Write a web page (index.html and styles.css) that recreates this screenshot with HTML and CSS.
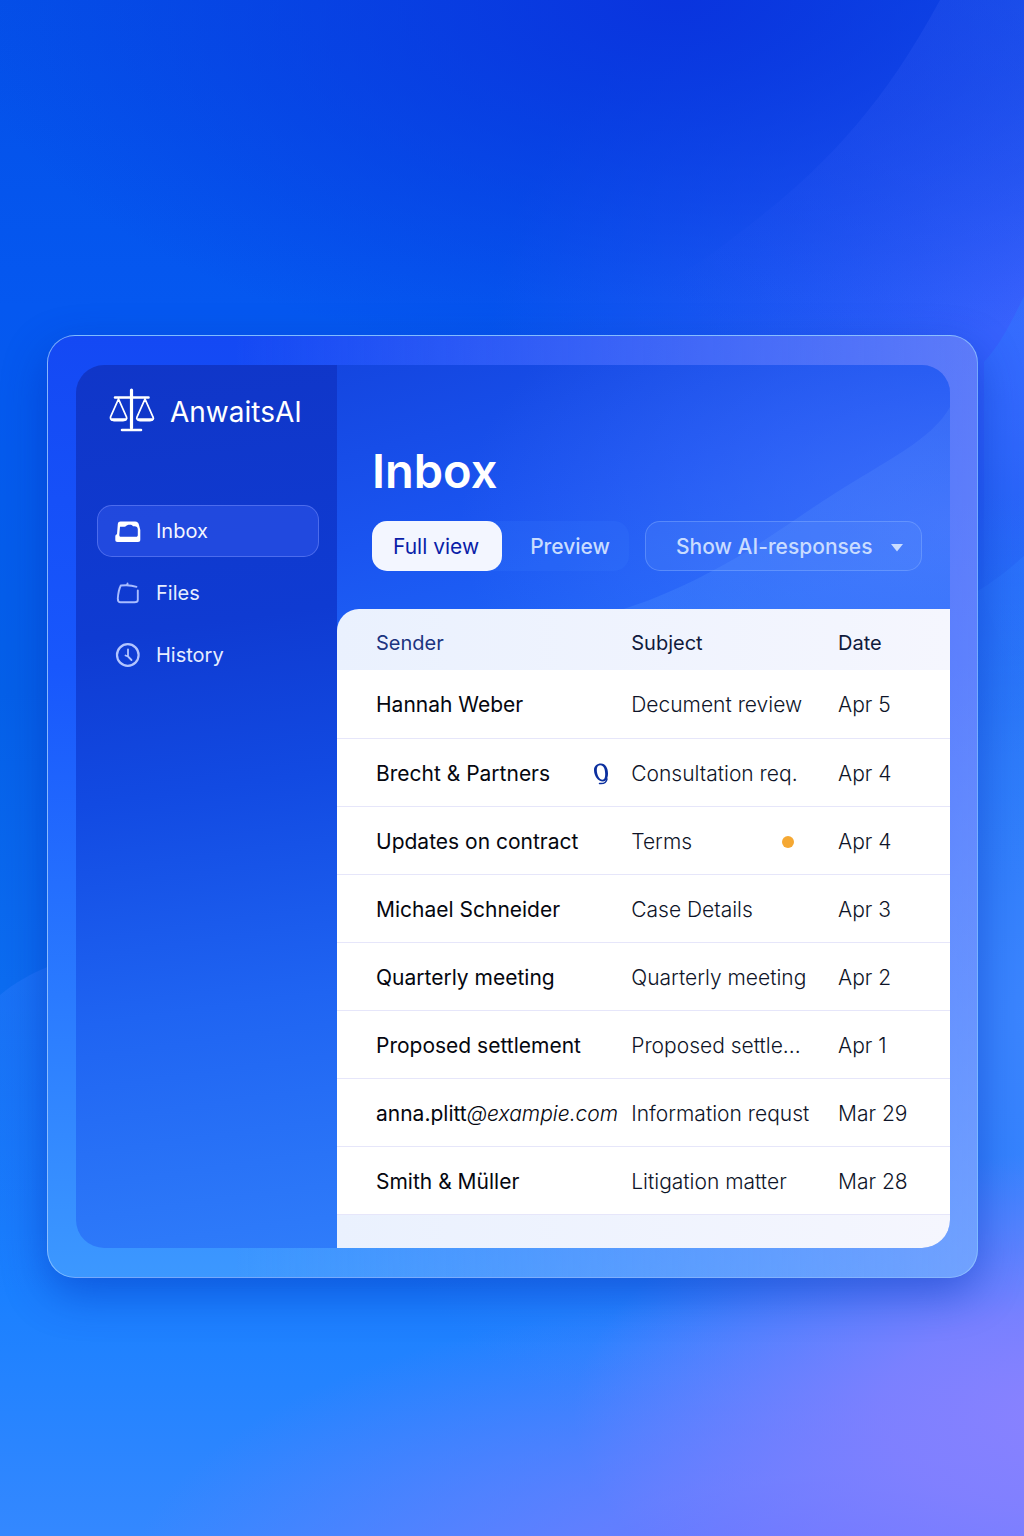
FILE: index.html
```html
<!DOCTYPE html>
<html lang="en">
<head>
<meta charset="utf-8">
<meta name="viewport" content="width=device-width, initial-scale=1">
<title>AnwaitsAI – Inbox</title>
<link rel="stylesheet" href="styles.css">
</head>
<body>
<svg class="backdrop" viewBox="0 0 1024 1536" preserveAspectRatio="none" aria-hidden="true">
  <defs>
    <linearGradient id="wave-top" x1="1" y1="0" x2="0.1" y2="0.7">
      <stop offset="0" stop-color="#5a7cff" stop-opacity=".16"/>
      <stop offset=".45" stop-color="#4a6cff" stop-opacity=".14"/>
      <stop offset="1" stop-color="#3a60ff" stop-opacity="0"/>
    </linearGradient>
    <linearGradient id="wave-mid" x1="0" y1="0" x2="0" y2="1">
      <stop offset="0" stop-color="#2f7cff" stop-opacity=".4"/>
      <stop offset="1" stop-color="#2f7cff" stop-opacity="0"/>
    </linearGradient>
  </defs>
  <path d="M940 0C870 130 800 190 700 262L560 340H1024V0Z" fill="url(#wave-top)"/>
  <path d="M1024 296C1010 325 1000 345 984 362V600L1024 700Z" fill="url(#wave-mid)"/>
  <path d="M1024 556C1008 570 996 580 976 592V900H1024Z" fill="url(#wave-mid)"/>
  <path d="M0 995C16 982 30 974 50 966V1300H0Z" fill="url(#wave-mid)"/>
</svg>

<div class="frame">
  <div class="app">
    <aside class="sidebar">
      <div class="brand">
        <svg class="brand-mark" viewBox="0 0 46 44" aria-hidden="true">
          <g fill="none" stroke="#fff" stroke-linecap="round" stroke-linejoin="round">
            <path d="M22.500 2V40" stroke-width="3.200"/>
            <path d="M6 9.500H39.500M13 42H32" stroke-width="2.600"/>
            <path d="M9.500 11L1.500 29C1.200 32 3 32.500 5 32.500H14C17 32.500 18.200 31 17.500 29L9.500 11M36 11L28 29C27.200 31 28.500 32.500 31 32.500H41C44 32.500 45 31 44 29L36 11" stroke-width="1.800"/>
            <path d="M3 31.500H16.500M29.500 31.500H43" stroke-width="2.400"/>
          </g>
        </svg>
        <span class="brand-name">AnwaitsAI</span>
      </div>
      <nav class="nav" aria-label="Mailbox">
        <a class="nav-link is-active" href="#inbox">
          <svg class="nav-icon" viewBox="0 0 26 26" aria-hidden="true">
            <path fill="#fff" fill-rule="evenodd" d="M5.500 3.500H20C22.500 3.500 23.500 5 24 7L25.300 12V21.500C25.300 23.300 24.500 24 23 24H2.500C1 24 .300 23.300 .300 21.800V18.500C.300 17.300 1 16.500 2 16.200L2.800 6C3 4.300 4 3.500 5.500 3.500ZM5 8.800L4.300 17C4.300 18.300 5 18.800 6 18.800H21C22.300 18.800 22.800 18.200 22.800 17V11.500C22.800 9.300 21.500 8.200 19.500 8.200H18C17 6.800 15.500 6.500 13.500 6.800C11.500 7 11 8.800 9.500 8.800Z"/>
          </svg>
          <span>Inbox</span>
        </a>
        <a class="nav-link" href="#files">
          <svg class="nav-icon" viewBox="0 0 26 26" aria-hidden="true">
            <path fill="none" stroke="#a9bcff" stroke-width="1.900" stroke-linecap="round" stroke-linejoin="round" d="M21.500 6.800C17 5.200 11 5 5.800 5.500C4.500 8 3.200 13 2.800 18.500C2.800 21 3.500 22.300 5.500 22.300H19.500C21.500 22.300 22.800 21.800 22.800 20V10.500M12.500 4.500V3.500"/>
          </svg>
          <span>Files</span>
        </a>
        <a class="nav-link" href="#history">
          <svg class="nav-icon" viewBox="0 0 26 26" aria-hidden="true">
            <g fill="none" stroke="#b3c5ff" stroke-width="2.200" stroke-linecap="round" stroke-linejoin="round">
              <circle cx="12.800" cy="13" r="10.800"/>
              <path d="M13 7.500V14.500L16.500 18M13 14.500L10.500 13.500" stroke-width="1.800"/>
            </g>
          </svg>
          <span>History</span>
        </a>
      </nav>
    </aside>

    <main class="main">
      <svg class="main-wave" viewBox="0 0 613 260" preserveAspectRatio="none" aria-hidden="true">
        <defs>
          <linearGradient id="wave-main" x1="0" y1="1" x2="1" y2="0">
            <stop offset="0" stop-color="#4a90ff" stop-opacity=".3"/>
            <stop offset="1" stop-color="#6a9aff" stop-opacity=".16"/>
          </linearGradient>
        </defs>
        <path d="M613 42C595 75 545 98 500 127C440 165 400 200 310 236L240 260H613Z" fill="url(#wave-main)"/>
      </svg>
      <header class="toolbar">
        <h1 class="title">Inbox</h1>
        <div class="controls">
          <div class="segmented" role="group" aria-label="View">
            <button class="segment is-selected" type="button" aria-pressed="true">Full view</button>
            <button class="segment" type="button" aria-pressed="false">Preview</button>
          </div>
          <div class="dropdown">
            <select class="dropdown-select" aria-label="Filter messages">
              <option>Show AI-responses</option>
            </select>
            <svg class="dropdown-caret" viewBox="0 0 12 8" aria-hidden="true"><path d="M0 0H12L6 7.500Z" fill="#c9dcff"/></svg>
          </div>
        </div>
      </header>

      <div class="sheet">
        <table class="mail">
          <colgroup><col class="col-sender"><col><col class="col-date"></colgroup>
          <thead>
            <tr><th scope="col">Sender</th><th scope="col">Subject</th><th scope="col">Date</th></tr>
          </thead>
          <tbody>
            <tr><td>Hannah Weber</td><td>Decument review</td><td>Apr 5</td></tr>
            <tr>
              <td>
                <div class="cell">
                  <span>Brecht &amp; Partners</span>
                  <svg class="clip" viewBox="0 0 16 22" role="img" aria-label="Attachment">
                    <path fill="#0b2f9e" fill-rule="evenodd" d="M8 .500C12.500.500 15 5 15 10.500C15 15.500 13 18.500 10 18.500C5 18.500 1 13 1 7C1 3 4 .500 8 .500ZM7.500 2.300C4.800 2.300 3.800 4 3.800 7C3.800 12 6.500 16.700 9.500 16.700C11.500 16.700 12.200 14.500 12.200 11C12.200 6 10.500 2.300 7.500 2.300Z"/>
                    <path fill="none" stroke="#0b2f9e" stroke-width="1.500" stroke-linecap="round" d="M14 16C13.500 19 11 21 6.500 20.500"/>
                  </svg>
                </div>
              </td>
              <td>Consultation req.</td><td>Apr 4</td>
            </tr>
            <tr>
              <td>Updates on contract</td>
              <td><div class="cell cell-status"><span>Terms</span><span class="dot" role="img" aria-label="Pending"></span></div></td>
              <td>Apr 4</td>
            </tr>
            <tr><td>Michael Schneider</td><td>Case Details</td><td>Apr 3</td></tr>
            <tr><td>Quarterly meeting</td><td>Quarterly meeting</td><td>Apr 2</td></tr>
            <tr><td>Proposed settlement</td><td>Proposed settle...</td><td>Apr 1</td></tr>
            <tr><td>anna.plitt<em>@exampie.com</em></td><td>Information requst</td><td>Mar 29</td></tr>
            <tr><td>Smith &amp; Müller</td><td>Litigation matter</td><td>Mar 28</td></tr>
          </tbody>
        </table>
      </div>
    </main>
  </div>
</div>
</body>
</html>
```
FILE: styles.css
```css
* {
  box-sizing: border-box;
}

body {
  position: relative;
  margin: 0;
  min-height: 100vh;
  padding: 335px 46px 128px 47px;
  font-family: Inter, "Liberation Sans", sans-serif;
  font-size: 21px;
  line-height: 28px;
  color: #0b0f1e;
  background:
    radial-gradient(ellipse 50% 17% at 106% 92%, #8c82ff 0%, rgba(136, 128, 255, .8) 40%, rgba(120, 128, 255, 0) 100%),
    radial-gradient(ellipse 70% 20% at 82% 104%, #6e72ff 0%, rgba(112, 124, 255, .75) 40%, rgba(100, 130, 255, 0) 100%),
    radial-gradient(ellipse 75% 34% at 104% 66%, #3c86ff 0%, rgba(60, 134, 255, .7) 50%, rgba(60, 134, 255, 0) 100%),
    radial-gradient(ellipse 70% 24% at 66% 0%, #0a34de 0%, rgba(10, 56, 226, 0) 100%),
    radial-gradient(ellipse 60% 30% at 108% 22%, #3e62ff 0%, rgba(58, 98, 255, 0) 100%),
    linear-gradient(180deg, #0450e8 0%, #0558f0 20%, #0560e8 45%, #0c6cf0 64%, #1a80ff 84%, #3488ff 100%);
}

.backdrop {
  position: absolute;
  inset: 0;
  width: 100%;
  height: 100%;
}

.frame {
  position: relative;
  padding: 29px 27px 29px 28px;
  border: 1px solid rgba(150, 200, 255, .75);
  border-radius: 28px;
  background:
    linear-gradient(90deg, rgba(165, 172, 255, 0) 20%, rgba(165, 172, 255, .5) 100%),
    linear-gradient(180deg, #1449f4 0%, #1857fc 35%, #2a7aff 70%, #3c98ff 100%);
  box-shadow: 0 16px 44px rgba(0, 40, 180, .45);
}

.app {
  display: flex;
  border-radius: 28px;
  overflow: hidden;
}

.sidebar {
  flex: 0 0 261px;
  padding: 23px 18px 0 21px;
  background: linear-gradient(172deg, #1036c8 0%, #0f3bd2 30%, #124ae2 48%, #1f64f2 72%, #2f7cfa 100%);
}

.brand {
  display: flex;
  align-items: center;
  gap: 15px;
  padding-left: 12px;
}

.brand-mark {
  width: 46px;
  height: 44px;
}

.brand-name {
  padding-top: 4px;
  font-size: 28px;
  line-height: 40px;
  color: #fff;
}

.nav {
  display: grid;
  gap: 10px;
  margin-top: 73px;
}

.nav-link {
  display: flex;
  align-items: center;
  gap: 15px;
  height: 52px;
  padding: 0 17px;
  border: 1px solid transparent;
  border-radius: 15px;
  font-size: 20px;
  color: #e6edff;
  text-decoration: none;
}

.nav-link.is-active {
  border-color: rgba(130, 150, 255, .45);
  background: rgba(70, 105, 255, .33);
  color: #f4f7ff;
}

.nav-icon {
  width: 26px;
  height: 26px;
}

.main {
  position: relative;
  flex: 1;
  min-width: 0;
  background:
    radial-gradient(ellipse 80% 34% at 100% 18%, rgba(80, 120, 255, .6), rgba(80, 125, 255, 0)),
    linear-gradient(165deg, #1446e0 0%, #1a54f0 18%, #1f66f8 34%);
}

.main-wave {
  position: absolute;
  top: 0;
  left: 0;
  width: 100%;
  height: 260px;
}

.toolbar {
  position: relative;
  padding: 78px 28px 38px 35px;
}

.title {
  margin: 0;
  font-size: 47px;
  line-height: 56px;
  font-weight: 600;
  color: #fff;
}

.controls {
  display: flex;
  gap: 16px;
  margin-top: 22px;
}

.segmented {
  display: flex;
  border-radius: 15px;
  background: rgba(60, 130, 255, .18);
}

.segment {
  height: 50px;
  padding: 2px 19px 0 28px;
  border: 0;
  border-radius: 15px;
  font: 500 21px/28px Inter, "Liberation Sans", sans-serif;
  color: #c9dcff;
  background: none;
}

.segment.is-selected {
  padding: 2px 23px 0 21px;
  font-weight: 400;
  color: #0a1ea8;
  background: #f3f6ff;
}

.dropdown {
  flex: 1;
  display: grid;
  align-items: center;
}

.dropdown-select,
.dropdown-caret {
  grid-area: 1 / 1;
}

.dropdown-select {
  appearance: none;
  width: 100%;
  height: 50px;
  padding: 2px 30px 0;
  border: 1px solid rgba(140, 180, 255, .4);
  border-radius: 15px;
  font: 500 21px/28px Inter, "Liberation Sans", sans-serif;
  color: #c9dcff;
  background: rgba(100, 150, 255, .2);
}

.dropdown-caret {
  justify-self: end;
  width: 12px;
  height: 8px;
  margin: 4px 19px 0 0;
  pointer-events: none;
}

.sheet {
  position: relative;
  padding-bottom: 33px;
  border-radius: 22px 0 0 0;
  overflow: hidden;
  background: linear-gradient(90deg, #eaf1fe 0%, #f5f6fe 100%);
}

.mail {
  width: 100%;
  table-layout: fixed;
  border-collapse: collapse;
}

.col-sender {
  width: 48%;
}

.col-date {
  width: 112px;
}

.mail th {
  height: 61px;
  padding: 6px 0 0;
  font-size: 20px;
  font-weight: 400;
  text-align: left;
  color: #101a3c;
}

.mail th:first-child {
  color: #1c3480;
}

.mail td {
  height: 68px;
  padding: 3px 0 0;
  border-bottom: 1px solid #e6e6fa;
  background: #fff;
  font-weight: 300;
  color: #0e1428;
  white-space: nowrap;
}

.mail td:first-child {
  font-weight: 400;
  color: #05070f;
}

.mail th:first-child,
.mail td:first-child {
  padding-left: 39px;
}

.mail em {
  font-weight: 300;
}

.cell {
  display: flex;
  align-items: center;
  justify-content: space-between;
  padding-right: 22px;
}

.cell-status {
  padding-right: 44px;
}

.clip {
  width: 16px;
  height: 22px;
}

.dot {
  width: 12px;
  height: 12px;
  border-radius: 50%;
  background: #f5a833;
}
```
